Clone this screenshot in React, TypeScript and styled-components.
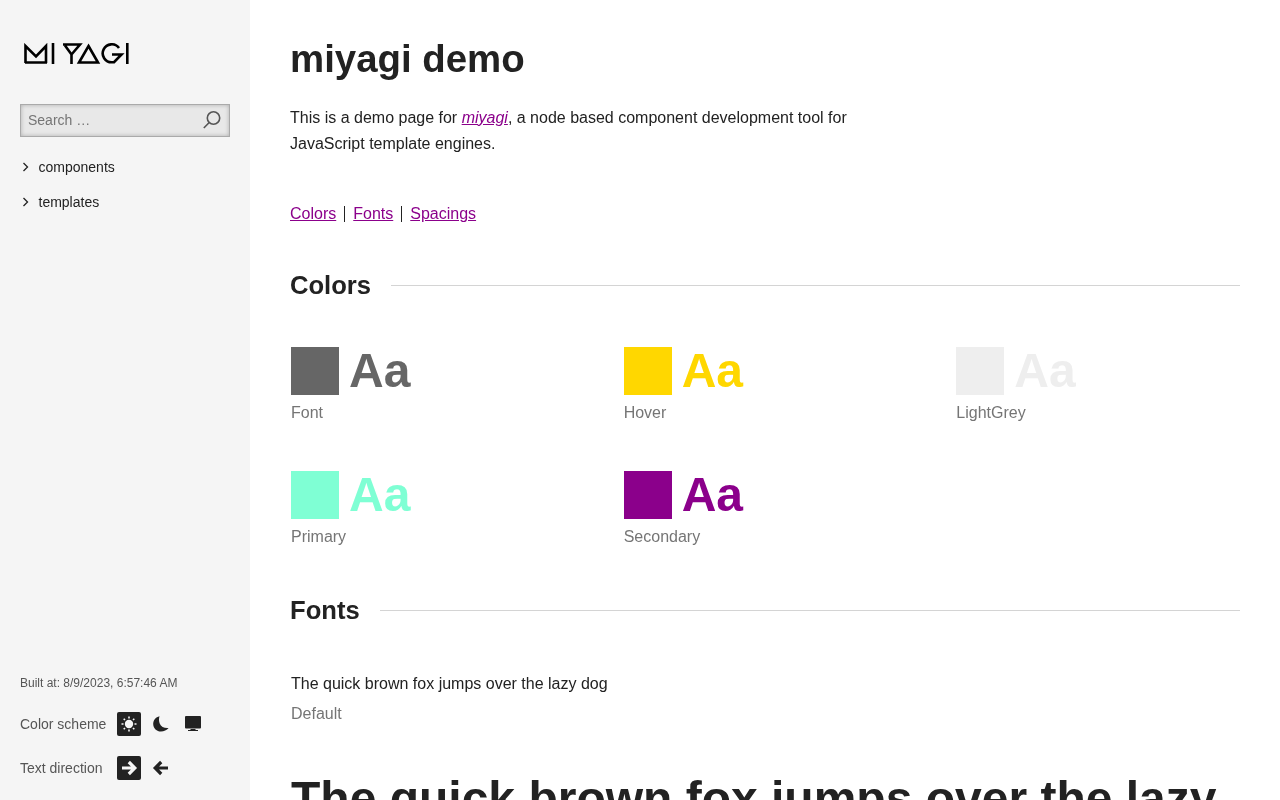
import styled, { createGlobalStyle } from "styled-components";

const GlobalStyle = createGlobalStyle`
    html, body {
        margin: 0;
        height: 100%;
        overflow: hidden;
    }
    body {
        font-family: "Liberation Sans", Arial, sans-serif;
        color: #222;
        background: #fff;
    }
`;

const Layout = styled.div`
    display: flex;
    height: 100vh;
    overflow: hidden;
    will-change: transform;
`;

const Sidebar = styled.aside`
    flex: 0 0 250px;
    box-sizing: border-box;
    height: 100vh;
    overflow-y: auto;
    padding: 43px 20px 20px;
    background: #f5f5f5;
    display: flex;
    flex-direction: column;
`;

const LogoLink = styled.a`
    display: block;
    height: 21px;
    line-height: 0;
`;

const SearchBox = styled.div`
    margin-top: 40px;
    position: relative;
    box-sizing: border-box;
    height: 33px;
    border: 1px solid #aaa;
    background: #e8e8e8;
    box-shadow: inset 0 0 4px rgba(0, 0, 0, 0.25);
    display: flex;
    align-items: center;
    justify-content: space-between;
    padding: 0 8px 2px 7px;
`;

const SearchText = styled.span`
    font-size: 14px;
    color: #757575;
`;

const NavList = styled.ul`
    list-style: none;
    margin: 22px 0 0;
    padding: 0;
    display: flex;
    flex-direction: column;
    gap: 19px;
`;

const NavItem = styled.li`
    display: flex;
    align-items: center;
    gap: 9.5px;
    height: 16px;
    padding-left: 2px;
    font-size: 14px;
    color: #222;
`;

const SidebarFooter = styled.div`
    margin-top: auto;
    display: flex;
    flex-direction: column;
`;

const BuiltAt = styled.p`
    margin: 0 0 21px;
    font-size: 12px;
    line-height: 16px;
    color: #555;
`;

const ToggleRow = styled.div`
    display: flex;
    align-items: center;
    height: 24px;
    margin-bottom: 20px;
    &:last-child {
        margin-bottom: 0;
    }
`;

const ToggleLabel = styled.span`
    width: 97px;
    font-size: 14px;
    color: #555;
`;

const ToggleButtons = styled.div`
    display: flex;
    gap: 8px;
`;

const ToggleButton = styled.span<{ $active?: boolean }>`
    width: 24px;
    height: 24px;
    border-radius: 2px;
    display: flex;
    align-items: center;
    justify-content: center;
    background: ${props => (props.$active ? "#222" : "transparent")};
    color: ${props => (props.$active ? "#f5f5f5" : "#222")};
`;

const Main = styled.main`
    flex: 1;
    min-width: 0;
    height: 100vh;
    box-sizing: border-box;
    overflow-y: auto;
    padding: 37px 40px 0;
`;

const Title = styled.h1`
    margin: 0;
    font-size: 38.4px;
    line-height: 44px;
    font-weight: 700;
    color: #222;
`;

const Intro = styled.p`
    margin: 24px 0 0;
    width: 600px;
    font-size: 16px;
    line-height: 26px;
    a {
        font-style: italic;
    }
`;

const TextLink = styled.a`
    color: #8b008b;
    text-decoration: underline;
`;

const Anchors = styled.nav`
    margin-top: 44px;
    display: flex;
    font-size: 16px;
    line-height: 26px;
`;

const AnchorItem = styled.span`
    padding: 0 8px;
    position: relative;
    &:first-child {
        padding-left: 0;
    }
    &:not(:last-child)::after {
        content: "";
        position: absolute;
        right: -1px;
        top: 5px;
        height: 16px;
        width: 1px;
        background: #222;
    }
    & + & {
        margin-left: 1px;
    }
`;

const SectionHeading = styled.h2<{ $top: number }>`
    margin: ${props => props.$top}px 0 0;
    display: flex;
    align-items: center;
    gap: 20px;
    font-size: 25.6px;
    line-height: 32px;
    font-weight: 700;
    color: #222;
    &::after {
        content: "";
        flex: 1;
        height: 1px;
        background: #d4d4d4;
    }
`;

const ColorGrid = styled.div`
    margin-top: 45px;
    display: grid;
    grid-template-columns: repeat(3, 1fr);
    column-gap: 48px;
    row-gap: 46px;
`;

const ColorItem = styled.div`
    padding: 1px;
`;

const ColorSample = styled.div<{ $color: string }>`
    display: flex;
    align-items: center;
    gap: 10px;
    height: 48px;
    font-size: 48px;
    line-height: 46px;
    font-weight: 700;
    color: ${props => props.$color};
    span {
        width: 48px;
        height: 48px;
        background: ${props => props.$color};
    }
`;

const Caption = styled.div`
    margin-top: 8px;
    font-size: 16px;
    line-height: 20px;
    color: #757575;
`;

const FontList = styled.div`
    margin-top: 48px;
    padding: 0 1px;
`;

const FontSample = styled.div<{ $large?: boolean }>`
    font-size: ${props => (props.$large ? "48px" : "16px")};
    font-weight: ${props => (props.$large ? 700 : 400)};
    line-height: ${props => (props.$large ? "56px" : "20px")};
    color: #222;
`;

const FontCaption = styled(Caption)`
    margin: 10px 0 47px;
`;

const Logo = () => (
    <svg width="106" height="21" viewBox="0 0 106 21" fill="none" stroke="#000" strokeWidth="2.6" style={{ marginLeft: 4 }}>
        <path d="M1.5 20V3L12 13.5L22 3V20M1 19.5H23" />
        <path d="M29 0V21" />
        <path d="M39 1.5H56L47.5 11.5L41 2.5M47.5 11V21" />
        <path d="M64.5 3L74 19.5H55Z" />
        <path d="M95 5A9 9 0 1 0 88 19.3L90 19.2L97.5 11.5H88" />
        <path d="M103.3 0V21" />
    </svg>
);

const SearchIcon = () => (
    <svg width="18" height="18" viewBox="0 0 18 18" fill="none" stroke="#555" strokeWidth="1.6">
        <circle cx="10.5" cy="7" r="6.2" />
        <path d="M6.2 11.5L0.8 17" />
    </svg>
);

const Chevron = () => (
    <svg width="7" height="10" viewBox="0 0 7 10" fill="none" stroke="#222" strokeWidth="1.3">
        <path d="M1.5 1L5.5 5L1.5 9" />
    </svg>
);

const SunIcon = () => (
    <svg width="20" height="20" viewBox="0 0 20 20" fill="currentColor" stroke="currentColor" strokeWidth="1.6" strokeLinecap="butt">
        <circle cx="10" cy="10" r="4.2" stroke="none" />
        <path d="M10 2.5V4.5M10 15.5V17.5M2.5 10H4.5M15.5 10H17.5M4.7 4.7L6 6M14 14L15.3 15.3M4.7 15.3L6 14M14 6L15.3 4.7" />
    </svg>
);

const MoonIcon = () => (
    <svg width="18" height="18" viewBox="0 0 18 18" fill="currentColor">
        <path d="M7.5 1.2C3.8 2 1.2 5.2 1.2 9C1.2 13.4 4.8 16.6 9 16.6C12 16.6 14.7 15.2 16.6 13C12.6 13.6 9 11.6 7.7 8.4C6.8 6 6.8 3.4 7.5 1.2Z" />
    </svg>
);

const MonitorIcon = () => (
    <svg width="18" height="18" viewBox="0 0 18 18" fill="currentColor">
        <rect x="1" y="1" width="16" height="12.5" rx="1" />
        <path d="M6.5 14H11.5V15H14V16H4V15H6.5Z" />
    </svg>
);

const ArrowIcon = ({ left }: { left?: boolean }) => (
    <svg width="18" height="18" viewBox="0 0 18 18" fill="none" stroke="currentColor" strokeWidth="3.2" style={left ? { transform: "scaleX(-1)" } : undefined}>
        <path d="M2 9H14.5M8.8 3L14.8 9L8.8 15" />
    </svg>
);

const colors = [
    { name: "Font", value: "#666666" },
    { name: "Hover", value: "#ffd700" },
    { name: "LightGrey", value: "#eeeeee" },
    { name: "Primary", value: "#7fffd4" },
    { name: "Secondary", value: "#8b008b" },
];

const App = () => {
    return (
        <Layout>
            <GlobalStyle />
            <Sidebar>
                <LogoLink><Logo /></LogoLink>
                <SearchBox>
                    <SearchText>Search …</SearchText>
                    <SearchIcon />
                </SearchBox>
                <NavList>
                    <NavItem><Chevron />components</NavItem>
                    <NavItem><Chevron />templates</NavItem>
                </NavList>
                <SidebarFooter>
                    <BuiltAt>Built at: 8/9/2023, 6:57:46 AM</BuiltAt>
                    <ToggleRow>
                        <ToggleLabel>Color scheme</ToggleLabel>
                        <ToggleButtons>
                            <ToggleButton $active><SunIcon /></ToggleButton>
                            <ToggleButton><MoonIcon /></ToggleButton>
                            <ToggleButton><MonitorIcon /></ToggleButton>
                        </ToggleButtons>
                    </ToggleRow>
                    <ToggleRow>
                        <ToggleLabel>Text direction</ToggleLabel>
                        <ToggleButtons>
                            <ToggleButton $active><ArrowIcon /></ToggleButton>
                            <ToggleButton><ArrowIcon left /></ToggleButton>
                        </ToggleButtons>
                    </ToggleRow>
                </SidebarFooter>
            </Sidebar>
            <Main>
                <Title>miyagi demo</Title>
                <Intro>
                    This is a demo page for <TextLink href="#">miyagi</TextLink>, a node based component development tool for JavaScript template engines.
                </Intro>
                <Anchors>
                    <AnchorItem><TextLink href="#colors">Colors</TextLink></AnchorItem>
                    <AnchorItem><TextLink href="#fonts">Fonts</TextLink></AnchorItem>
                    <AnchorItem><TextLink href="#spacings">Spacings</TextLink></AnchorItem>
                </Anchors>
                <SectionHeading id="colors" $top={42}>Colors</SectionHeading>
                <ColorGrid>
                    {colors.map((color) => (
                        <ColorItem key={color.name}>
                            <ColorSample $color={color.value}><span />Aa</ColorSample>
                            <Caption>{color.name}</Caption>
                        </ColorItem>
                    ))}
                </ColorGrid>
                <SectionHeading id="fonts" $top={46}>Fonts</SectionHeading>
                <FontList>
                    <FontSample>The quick brown fox jumps over the lazy dog</FontSample>
                    <FontCaption>Default</FontCaption>
                    <FontSample $large>The quick brown fox jumps over the lazy dog</FontSample>
                </FontList>
            </Main>
        </Layout>
    );
};

export default App;
